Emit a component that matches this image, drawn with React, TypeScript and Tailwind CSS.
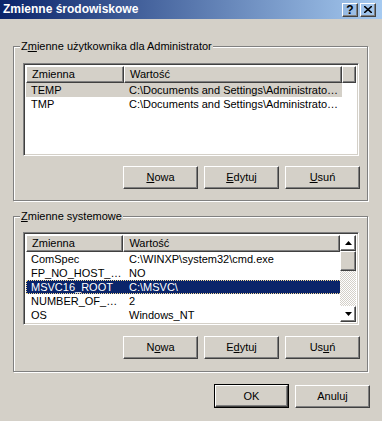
import React from "react"

const raised =
  "border border-t-white border-l-white border-r-[#404040] border-b-[#404040] shadow-[inset_-1px_-1px_#808080]"
const sunken =
  "border border-t-[#808080] border-l-[#808080] border-r-white border-b-white shadow-[inset_1px_1px_#404040,inset_-1px_-1px_#d4d0c8]"

type Row = { name: string; value: string; state?: "gray" | "focus" }

const userVars: Row[] = [
  { name: "TEMP", value: "C:\\Documents and Settings\\Administrator\\Ustawienia lokalne\\Temp", state: "gray" },
  { name: "TMP", value: "C:\\Documents and Settings\\Administrator\\Ustawienia lokalne\\Temp" },
]

const sysVars: Row[] = [
  { name: "ComSpec", value: "C:\\WINXP\\system32\\cmd.exe" },
  { name: "FP_NO_HOST_CHECK", value: "NO" },
  { name: "MSVC16_ROOT", value: "C:\\MSVC\\", state: "focus" },
  { name: "NUMBER_OF_PROCESSORS", value: "2" },
  { name: "OS", value: "Windows_NT" },
  { name: "Path", value: "C:\\WINXP\\system32;C:\\WINXP;C:\\WINXP\\System32\\Wbem" },
]

function Mn({ text, at }: { text: string; at: number }) {
  return (
    <>
      {text.slice(0, at)}
      <u className="underline-offset-[1px]">{text[at]}</u>
      {text.slice(at + 1)}
    </>
  )
}

function Btn({ children, def }: { children: React.ReactNode; def?: boolean }) {
  if (def) {
    return (
      <div className="w-[75px] h-[24px] border border-black flex">
        <div className={`${raised} flex-1 flex items-center justify-center`}>{children}</div>
      </div>
    )
  }
  return (
    <div className={`${raised} w-[75px] h-[23px] flex items-center justify-center`}>{children}</div>
  )
}

function Arrow({ up }: { up?: boolean }) {
  return (
    <div className={`${raised} w-[16px] h-[16px] flex items-center justify-center`}>
      <svg width="7" height="4" viewBox="0 0 7 4">
        {up ? <path d="M3.5 0 L7 4 L0 4 Z" fill="black" /> : <path d="M0 0 L7 0 L3.5 4 Z" fill="black" />}
      </svg>
    </div>
  )
}

function ListView({ rows, scroll }: { rows: Row[]; scroll?: boolean }) {
  return (
    <div className={`${sunken} bg-white w-[336px] h-[93px] p-[2px] flex overflow-hidden`}>
      <div className="flex-1 flex flex-col overflow-hidden">
        <div className="flex h-[17px] shrink-0 bg-[#d4d0c8]">
          <div className={`${raised} w-[98px] pl-[5px] leading-[15px]`}>Zmienna</div>
          <div className={`${raised} w-[218px] pl-[5px] leading-[15px]`}>Wartość</div>
          {!scroll && <div className={`${raised} flex-1`} />}
        </div>
        {rows.map((r) => (
          <div
            key={r.name}
            className={`flex h-[14px] shrink-0 w-[316px] ${
              r.state === "gray"
                ? "bg-[#d4d0c8]"
                : r.state === "focus"
                ? "bg-[#0a246a] text-white outline outline-1 outline-dotted outline-[#f5db95] -outline-offset-1"
                : ""
            }`}
          >
            <div className="w-[98px] pl-[5px] pr-[2px] leading-[14px] truncate">{r.name}</div>
            <div className="w-[218px] pl-[5px] pr-[2px] leading-[14px] truncate">{r.value}</div>
          </div>
        ))}
      </div>
      {scroll && (
        <div className="w-[16px] flex flex-col shrink-0">
          <Arrow up />
          <div className={`${raised} w-[16px] h-[20px] bg-[#d4d0c8]`} />
          <div className="flex-1 bg-[repeating-conic-gradient(#d4d0c8_0_25%,#ffffff_0_50%)] bg-[length:2px_2px]" />
          <Arrow />
        </div>
      )}
    </div>
  )
}

function Group({ label, children, className }: { label: React.ReactNode; children: React.ReactNode; className: string }) {
  return (
    <div
      className={`relative border border-[#808080] shadow-[inset_1px_1px_white,1px_1px_white] w-[355px] ${className}`}
    >
      <div className="absolute left-[6px] -top-[7px] px-[1px] bg-[#d4d0c8] leading-[13px]">{label}</div>
      {children}
    </div>
  )
}

export default function App() {
  return (
    <div className="w-[382px] h-[421px] bg-[#d4d0c8] font-['Liberation_Sans',Arial,sans-serif] text-[11px] text-black overflow-hidden">
      {/* Title bar */}
      <div className="h-[19px] flex items-center bg-[linear-gradient(to_right,#0a246a,#a6caf0)] pl-[3px] pr-[6px]">
        <span className="text-white font-bold text-[12px] leading-[19px]">Zmienne środowiskowe</span>
        <div className="ml-auto flex gap-[2px]">
          <div className={`${raised} w-[16px] h-[14px] flex items-center justify-center font-bold text-[12px] leading-none`}>?</div>
          <div className={`${raised} w-[16px] h-[14px] flex items-center justify-center`}>
            <svg width="8" height="7" viewBox="0 0 8 7">
              <path d="M0 0 L8 7 M8 0 L0 7" stroke="black" strokeWidth="1.6" />
            </svg>
          </div>
        </div>
      </div>

      <div className="pl-[13px]">
        <Group
          className="mt-[27px] h-[155px]"
          label={<Mn text="Zmienne użytkownika dla Administrator" at={1} />}
        >
          <div className="pl-[9px] pt-[16px]">
            <ListView rows={userVars} />
          </div>
          <div className="flex justify-end gap-[6px] pr-[7px] mt-[10px]">
            <Btn><Mn text="Nowa" at={0} /></Btn>
            <Btn><Mn text="Edytuj" at={0} /></Btn>
            <Btn><Mn text="Usuń" at={0} /></Btn>
          </div>
        </Group>

        <Group className="mt-[15px] h-[156px]" label={<Mn text="Zmienne systemowe" at={0} />}>
          <div className="pl-[9px] pt-[15px]">
            <ListView rows={sysVars} scroll />
          </div>
          <div className="flex justify-end gap-[6px] pr-[7px] mt-[11px]">
            <Btn><Mn text="Nowa" at={1} /></Btn>
            <Btn><Mn text="Edytuj" at={1} /></Btn>
            <Btn><Mn text="Usuń" at={2} /></Btn>
          </div>
        </Group>

        <div className="flex justify-end gap-[6px] pr-[12px] mt-[12px] items-center">
          <Btn def>OK</Btn>
          <Btn>Anuluj</Btn>
        </div>
      </div>
    </div>
  )
}
